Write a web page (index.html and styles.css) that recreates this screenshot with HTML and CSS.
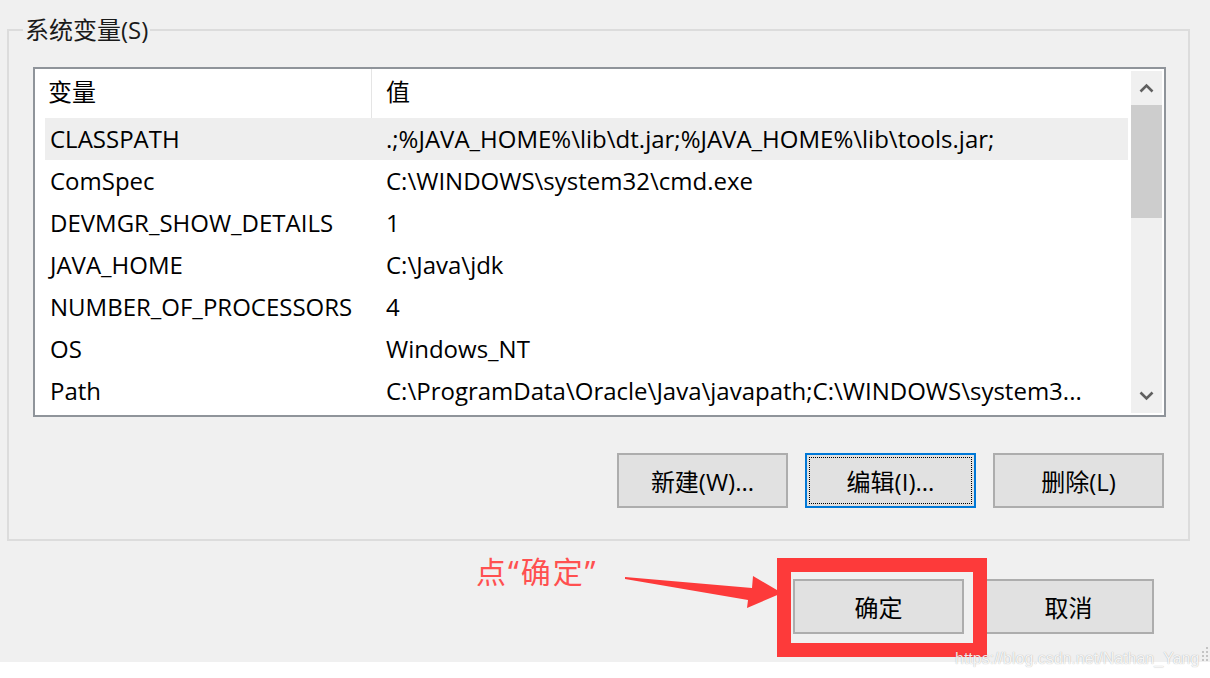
FILE: index.html
```html
<!DOCTYPE html>
<html lang="zh-CN">
<head>
<meta charset="utf-8">
<title>系统变量</title>
<link rel="stylesheet" href="styles.css">
</head>
<body>
<div class="dialog">
  <fieldset class="group">
    <legend>系统变量(S)</legend>
    <div class="listbox">
      <div class="table">
        <div class="row head"><div class="c1">变量</div><div class="c2">值</div></div>
        <div class="row sel"><div class="c1">CLASSPATH</div><div class="c2">.;%JAVA_HOME%\lib\dt.jar;%JAVA_HOME%\lib\tools.jar;</div></div>
        <div class="row"><div class="c1">ComSpec</div><div class="c2">C:\WINDOWS\system32\cmd.exe</div></div>
        <div class="row"><div class="c1">DEVMGR_SHOW_DETAILS</div><div class="c2">1</div></div>
        <div class="row"><div class="c1">JAVA_HOME</div><div class="c2">C:\Java\jdk</div></div>
        <div class="row"><div class="c1">NUMBER_OF_PROCESSORS</div><div class="c2">4</div></div>
        <div class="row"><div class="c1">OS</div><div class="c2">Windows_NT</div></div>
        <div class="row"><div class="c1">Path</div><div class="c2">C:\ProgramData\Oracle\Java\javapath;C:\WINDOWS\system3...</div></div>
      </div>
      <div class="scroll">
        <div class="sb-btn"><svg width="15" height="10" viewBox="0 0 15 10"><path d="M1.5 8.5 L7.5 2.5 L13.5 8.5" fill="none" stroke="#606060" stroke-width="2.6"/></svg></div>
        <div class="thumb"></div>
        <div class="track"></div>
        <div class="sb-btn"><svg width="15" height="10" viewBox="0 0 15 10"><path d="M1.5 1.5 L7.5 7.5 L13.5 1.5" fill="none" stroke="#606060" stroke-width="2.6"/></svg></div>
      </div>
    </div>
    <div class="actions">
      <button class="btn">新建(W)...</button>
      <button class="btn focus">编辑(I)...</button>
      <button class="btn">删除(L)</button>
    </div>
  </fieldset>
  <div class="footer">
    <button class="btn">确定</button>
    <button class="btn">取消</button>
  </div>

  <div class="callout">点“确定”</div>
  <svg class="arrow" width="200" height="70" viewBox="0 0 200 70"><polygon points="25,22 152,33 153,21 182,38 147,53 148,45 25,24" fill="#fd3a3a"/></svg>
  <div class="redbox"></div>
  <svg class="grip" width="10" height="16" viewBox="0 0 10 16"><g fill="#c4c4c4"><rect x="7" y="1" width="2" height="2"/><rect x="7" y="5" width="2" height="2"/><rect x="3" y="5" width="2" height="2"/><rect x="7" y="9" width="2" height="2"/><rect x="3" y="9" width="2" height="2"/><rect x="7" y="13" width="2" height="2"/><rect x="3" y="13" width="2" height="2"/></g></svg>
</div>
<div class="watermark">https://blog.csdn.net/Nathan_Yang</div>
</body>
</html>
```
FILE: styles.css
```css
html { background: #ffffff; }
body {
  margin: 0;
  position: relative;
  height: 678px;
  overflow: hidden;
  font-family: "Open Sans", "Noto Sans CJK SC", sans-serif;
  font-size: 24px;
  color: #000;
}
.dialog {
  position: relative;
  height: 662px;
  box-sizing: border-box;
  padding-top: 15px;
  background: #f0f0f0;
}
.group {
  margin: 0 20px 0 7px;
  border: 2px solid #dcdcdc;
  padding: 22px 22px 31px 24px;
  min-width: 0;
}
.group legend {
  margin-left: -10px;
  padding: 0 2px;
  font-size: 24px;
  line-height: 30px;
  color: #1a1a1a;
}
.listbox {
  display: flex;
  height: 350px;
  box-sizing: border-box;
  border: 2px solid #8f949a;
  background: #fff;
  padding: 0 2px 0 10px;
}
.table {
  flex: 1;
  min-width: 0;
  overflow: hidden;
  margin-right: 3px;
}
.row {
  display: flex;
  height: 42px;
  line-height: 42px;
  white-space: nowrap;
}
.row.head { height: 49px; line-height: 46px; }
.row.sel { background: #eeeeee; }
.c1 {
  width: 327px;
  flex: none;
  box-sizing: border-box;
  padding-left: 5px;
}
.head .c1 {
  padding-left: 3px;
  border-right: 1px solid #e5e5e5;
}
.c2 {
  flex: 1;
  min-width: 0;
  overflow: hidden;
  padding-left: 14px;
}
.scroll {
  width: 31px;
  flex: none;
  margin: 2px 0;
  background: #f0f0f0;
  display: flex;
  flex-direction: column;
}
.sb-btn {
  height: 34px;
  display: flex;
  align-items: center;
  justify-content: center;
}
.thumb { height: 113px; background: #cdcdcd; }
.track { flex: 1; }
.actions {
  display: flex;
  justify-content: flex-end;
  gap: 17px;
  margin-top: 36px;
  padding-right: 2px;
}
.btn {
  width: 171px;
  height: 55px;
  padding: 0;
  background: #e1e1e1;
  border: 2px solid #adadad;
  font-family: inherit;
  font-size: 24px;
  color: #000;
}
.btn.focus {
  border-color: #0078d7;
  outline: 1px dotted #000;
  outline-offset: -5px;
}
.footer {
  display: flex;
  justify-content: flex-end;
  gap: 19px;
  margin-top: 38px;
  padding-right: 56px;
}
.callout {
  position: absolute;
  left: 476px;
  top: 552px;
  font-family: "Noto Sans", "Noto Sans CJK SC", sans-serif;
  font-size: 30px;
  line-height: 40px;
  letter-spacing: 2px;
  color: #ff5050;
}
.arrow {
  position: absolute;
  left: 600px;
  top: 555px;
}
.redbox {
  position: absolute;
  left: 777px;
  top: 558px;
  width: 210px;
  height: 99px;
  box-sizing: border-box;
  border: 14px solid #fd3a3a;
}
.grip {
  position: absolute;
  left: 1199px;
  top: 646px;
}
.watermark {
  position: absolute;
  left: 955px;
  top: 648px;
  font-family: "Liberation Sans", Arial, sans-serif;
  font-size: 16px;
  line-height: 22px;
  color: rgba(255, 255, 255, 0.9);
  text-shadow: 0 0 1px rgba(0, 0, 0, 0.35);
}
```
